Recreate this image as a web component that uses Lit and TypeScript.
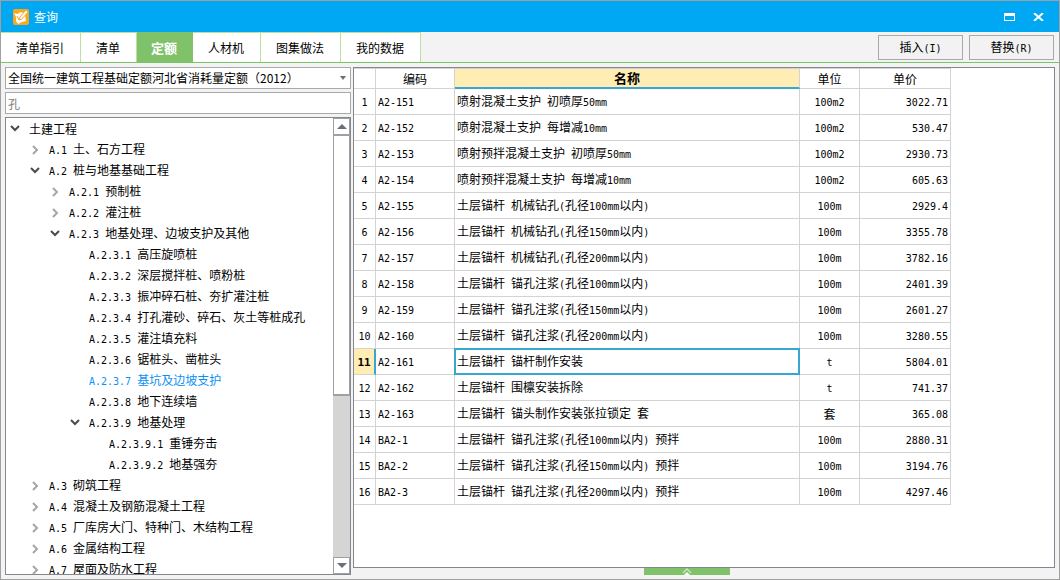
import { LitElement, html, css, svg } from "lit";
import { customElement, state } from "lit/decorators.js";
import { classMap } from "lit/directives/class-map.js";

interface Row { code: string; name: string; unit: string; price: string; }
interface Node { level: number; text: string; arrow: "open" | "closed" | ""; }

const ROWS: Row[] = [
  ["A2-151", "喷射混凝土支护 初喷厚50mm", "100m2", "3022.71"],
  ["A2-152", "喷射混凝土支护 每增减10mm", "100m2", "530.47"],
  ["A2-153", "喷射预拌混凝土支护 初喷厚50mm", "100m2", "2930.73"],
  ["A2-154", "喷射预拌混凝土支护 每增减10mm", "100m2", "605.63"],
  ["A2-155", "土层锚杆 机械钻孔(孔径100mm以内)", "100m", "2929.4"],
  ["A2-156", "土层锚杆 机械钻孔(孔径150mm以内)", "100m", "3355.78"],
  ["A2-157", "土层锚杆 机械钻孔(孔径200mm以内)", "100m", "3782.16"],
  ["A2-158", "土层锚杆 锚孔注浆(孔径100mm以内)", "100m", "2401.39"],
  ["A2-159", "土层锚杆 锚孔注浆(孔径150mm以内)", "100m", "2601.27"],
  ["A2-160", "土层锚杆 锚孔注浆(孔径200mm以内)", "100m", "3280.55"],
  ["A2-161", "土层锚杆 锚杆制作安装", "t", "5804.01"],
  ["A2-162", "土层锚杆 围檩安装拆除", "t", "741.37"],
  ["A2-163", "土层锚杆 锚头制作安装张拉锁定 套", "套", "365.08"],
  ["BA2-1", "土层锚杆 锚孔注浆(孔径100mm以内) 预拌", "100m", "2880.31"],
  ["BA2-2", "土层锚杆 锚孔注浆(孔径150mm以内) 预拌", "100m", "3194.76"],
  ["BA2-3", "土层锚杆 锚孔注浆(孔径200mm以内) 预拌", "100m", "4297.46"],
].map(([code, name, unit, price]) => ({ code, name, unit, price }));

const NODES: Node[] = ([
  [0, "土建工程", "open"],
  [1, "A.1 土、石方工程", "closed"],
  [1, "A.2 桩与地基基础工程", "open"],
  [2, "A.2.1 预制桩", "closed"],
  [2, "A.2.2 灌注桩", "closed"],
  [2, "A.2.3 地基处理、边坡支护及其他", "open"],
  [3, "A.2.3.1 高压旋喷桩", ""],
  [3, "A.2.3.2 深层搅拌桩、喷粉桩", ""],
  [3, "A.2.3.3 振冲碎石桩、夯扩灌注桩", ""],
  [3, "A.2.3.4 打孔灌砂、碎石、灰土等桩成孔", ""],
  [3, "A.2.3.5 灌注填充料", ""],
  [3, "A.2.3.6 锯桩头、凿桩头", ""],
  [3, "A.2.3.7 基坑及边坡支护", ""],
  [3, "A.2.3.8 地下连续墙", ""],
  [3, "A.2.3.9 地基处理", "open"],
  [4, "A.2.3.9.1 重锤夯击", ""],
  [4, "A.2.3.9.2 地基强夯", ""],
  [1, "A.3 砌筑工程", "closed"],
  [1, "A.4 混凝土及钢筋混凝土工程", "closed"],
  [1, "A.5 厂库房大门、特种门、木结构工程", "closed"],
  [1, "A.6 金属结构工程", "closed"],
  [1, "A.7 屋面及防水工程", "closed"],
] as [number, string, Node["arrow"]][]).map(([level, text, arrow]) => ({ level, text, arrow }));

const TABS = ["清单指引", "清单", "定额", "人材机", "图集做法", "我的数据"];

/* Sets Latin runs in a half-width face beside full-width Chinese. */
const mixed = (text: string) =>
  text.split(/([\x20-\x7e]+)/).filter(Boolean).map((run) =>
    /^[\x20-\x7e]/.test(run) ? html`<span class="half">${run}</span>` : run);

const openArrow = svg`<path d="M1 2 L5 6 L9 2" fill="none" stroke="#4a4a4a" stroke-width="2"/>`;
const closedArrow = svg`<path d="M3 1 L7 5 L3 9" fill="none" stroke="#a6a6a6" stroke-width="2"/>`;

@customElement("app-root")
export class AppRoot extends LitElement {
  @state() private tab = "定额";
  @state() private node = "A.2.3.7 基坑及边坡支护";
  @state() private row = 10;

  static styles = css`
    :host {
      display: block;
      height: 100vh;
      font: 12px/16px "Noto Sans CJK SC", sans-serif;
      color: #000;
    }
    * { box-sizing: border-box; }
    button, input, select { font: inherit; color: inherit; margin: 0; border-radius: 0; }
    .half { font-family: "DejaVu Sans Mono", monospace; font-size: 10px; white-space: pre; }
    .window {
      display: flex;
      flex-direction: column;
      height: 100%;
      background: #f3f3f3;
      border: 1px solid #a0a0a0;
    }
    .title {
      display: flex;
      align-items: center;
      flex: none;
      height: 31px;
      padding: 0 12px;
      background: #00a8f3;
      color: #fff;
    }
    .title h1 { flex: 1; margin: 0 0 0 5px; font-size: 12px; font-weight: 400; }
    .title button {
      display: grid;
      place-items: center;
      width: 29px;
      height: 24px;
      padding: 0;
      border: 0;
      background: none;
    }
    .title button:last-child { margin-right: -6px; }
    .bar {
      display: flex;
      flex: none;
      height: 31px;
      border-bottom: 1px solid #7cc46a;
    }
    .tabs { display: flex; flex: 1; }
    .tab {
      padding: 0 16px 0 15px;
      border: solid #b7e39f;
      border-width: 1px 1px 0 0;
      background: #fff;
    }
    .tab.active {
      padding: 0 15px 0 14px;
      background: #80c269;
      border-color: #80c269;
      color: #fff;
      font-size: 13px;
      font-weight: 700;
    }
    .actions { display: flex; gap: 6px; padding: 3px 5px 2px 0; }
    .action {
      width: 85px;
      padding: 0;
      border: 1px solid #a9a9a9;
      background: #f2f2f2;
    }
    .body {
      display: grid;
      grid-template-columns: 346px 1fr;
      gap: 2px;
      flex: 1;
      min-height: 0;
      padding: 4px;
    }
    .side { display: flex; flex-direction: column; gap: 3px; min-height: 0; }
    .combo { display: grid; }
    .combo > * { grid-area: 1 / 1; }
    .combo svg { justify-self: end; align-self: center; margin-right: 5px; pointer-events: none; }
    select, .search {
      width: 100%;
      height: 22px;
      padding: 0 2px;
      border: 1px solid #a9a9a9;
      background: #fff;
      outline: 0;
    }
    select { appearance: none; }
    .search { color: #808080; }
    .tree {
      display: flex;
      flex: 1;
      min-height: 0;
      border: 1px solid #84878f;
      background: #fff;
    }
    .nodes { flex: 1; margin: 0; padding: 0; overflow: hidden; list-style: none; }
    .node {
      display: flex;
      align-items: center;
      height: 21px;
      padding-left: calc(4px + var(--level) * 20px);
      white-space: nowrap;
    }
    .node svg, .gap { flex: none; width: 10px; margin-right: 9px; }
    .node.selected { color: #0a90f5; }
    .scroll { display: flex; flex-direction: column; width: 17px; background: #d5d5d5; }
    .scroll button {
      display: grid;
      place-items: center;
      flex: none;
      height: 17px;
      padding: 0;
      border: 1px solid #a0a0a0;
      background: #fff;
    }
    .scroll button:last-child { margin-top: auto; }
    .thumb { height: 261px; border: 1px solid #a0a0a0; border-width: 1px 1px 2px; background: #fff; }
    .main { display: flex; flex-direction: column; min-width: 0; min-height: 0; }
    .sheet {
      flex: 1;
      min-height: 0;
      overflow: hidden;
      border: 1px solid #84878f;
      background: #fff;
    }
    table { table-layout: fixed; width: 597px; border-collapse: separate; border-spacing: 0; }
    .c-no { width: 22px; }
    .c-code { width: 79px; }
    .c-unit { width: 60px; }
    .c-price { width: 91px; }
    th, td {
      height: 26px;
      padding: 0 2px;
      border: solid #d3d3d3;
      border-width: 0 1px 1px 0;
      font-weight: 400;
      text-align: left;
      white-space: nowrap;
      overflow: hidden;
    }
    thead th { height: 21px; border-top-width: 1px; text-align: center; }
    thead .hot {
      background: #ffedb3;
      border-bottom: 2px solid #37a6d0;
      font-size: 13px;
      font-weight: 700;
    }
    tbody th { padding: 0; text-align: center; }
    tbody td:nth-child(4) { text-align: center; }
    tbody td:nth-child(5) { text-align: right; }
    .current th { background: #ffedb3; border-right: 2px solid #37a6d0; font-weight: 700; }
    .current th .half { font-size: 11px; }
    .current .name {
      border-color: #37a6d0;
      box-shadow: inset -1px -1px #37a6d0, inset 1px 1px #37a6d0, -1px -1px #37a6d0, -1px 0 #37a6d0, 0 -1px #37a6d0;
    }
    .foot { display: flex; justify-content: center; flex: none; height: 7px; padding-right: 34px; }
    .handle {
      display: grid;
      place-items: center;
      width: 86px;
      height: 7px;
      padding: 0;
      border: 0;
      background: #80c269;
    }
  `;

  render() {
    return html`
      <div class="window">
        <header class="title">
          <svg width="16" height="16" viewBox="0 0 16 16">
            <rect width="16" height="16" rx="2" fill="#fba81f"/>
            <path d="M1 4 L4 5 L8 3 L12 5 L13 12 L9 13 L5 15 L3 12 L3 8 Z" fill="#fff"/>
            <path d="M4 7 L6 11 L14 3" fill="none" stroke="#fba81f" stroke-width="1"/>
            <path d="M6 11 L7 8 L13 1 L15 3 L9 10 Z" fill="#fff" stroke="#fba81f" stroke-width="1"/>
          </svg>
          <h1>查询</h1>
          <button aria-label="最大化">
            <svg width="11" height="8" viewBox="0 0 11 8"><path d="M0 0H11V8H0ZM1 3V7H10V3Z" fill="#fff" fill-rule="evenodd"/></svg>
          </button>
          <button aria-label="关闭">
            <svg width="11" height="8" viewBox="0 0 11 8"><path d="M1 0 L10 8 M10 0 L1 8" stroke="#fff" stroke-width="2"/></svg>
          </button>
        </header>
        <div class="bar">
          <nav class="tabs">
            ${TABS.map((t) => html`<button class=${classMap({ tab: true, active: t === this.tab })} @click=${() => (this.tab = t)}>${t}</button>`)}
          </nav>
          <div class="actions">
            <button class="action">${mixed("插入(I)")}</button>
            <button class="action">${mixed("替换(R)")}</button>
          </div>
        </div>
        <div class="body">
          <aside class="side">
            <div class="combo">
              <select aria-label="定额库"><option>全国统一建筑工程基础定额河北省消耗量定额（2012）</option></select>
              <svg width="6" height="4" viewBox="0 0 6 4"><path d="M0 0H6L3 4Z" fill="#6a6f78"/></svg>
            </div>
            <input class="search" aria-label="搜索" value="孔">
            <div class="tree">
              <ul class="nodes">
                ${NODES.map((n) => html`
                  <li class=${classMap({ node: true, selected: n.text === this.node })} style="--level:${n.level}" @click=${() => (this.node = n.text)}>
                    ${n.arrow
                      ? html`<svg width="10" height="10" viewBox="0 0 10 10">${n.arrow === "open" ? openArrow : closedArrow}</svg>`
                      : html`<span class="gap"></span>`}
                    <span>${mixed(n.text)}</span>
                  </li>`)}
              </ul>
              <div class="scroll">
                <button aria-label="向上"><svg width="10" height="5" viewBox="0 0 10 5"><path d="M5 0L10 5H0Z" fill="#6a6f80"/></svg></button>
                <div class="thumb"></div>
                <button aria-label="向下"><svg width="10" height="5" viewBox="0 0 10 5"><path d="M0 0H10L5 5Z" fill="#6a6f80"/></svg></button>
              </div>
            </div>
          </aside>
          <main class="main">
            <div class="sheet">
              <table>
                <colgroup><col class="c-no"><col class="c-code"><col><col class="c-unit"><col class="c-price"></colgroup>
                <thead><tr><th></th><th>编码</th><th class="hot">名称</th><th>单位</th><th>单价</th></tr></thead>
                <tbody>
                  ${ROWS.map((r, i) => html`
                    <tr class=${classMap({ current: i === this.row })} @click=${() => (this.row = i)}>
                      <th>${mixed(String(i + 1))}</th>
                      <td>${mixed(r.code)}</td>
                      <td class="name">${mixed(r.name)}</td>
                      <td>${mixed(r.unit)}</td>
                      <td>${mixed(r.price)}</td>
                    </tr>`)}
                </tbody>
              </table>
            </div>
            <div class="foot">
              <button class="handle" aria-label="展开">
                <svg width="10" height="7" viewBox="0 0 10 7"><path d="M1 5L5 1L9 5" fill="none" stroke="#c4e8b4" stroke-width="1.5"/><path d="M2 7L5 4L8 7Z" fill="#fff"/></svg>
              </button>
            </div>
          </main>
        </div>
      </div>`;
  }
}
